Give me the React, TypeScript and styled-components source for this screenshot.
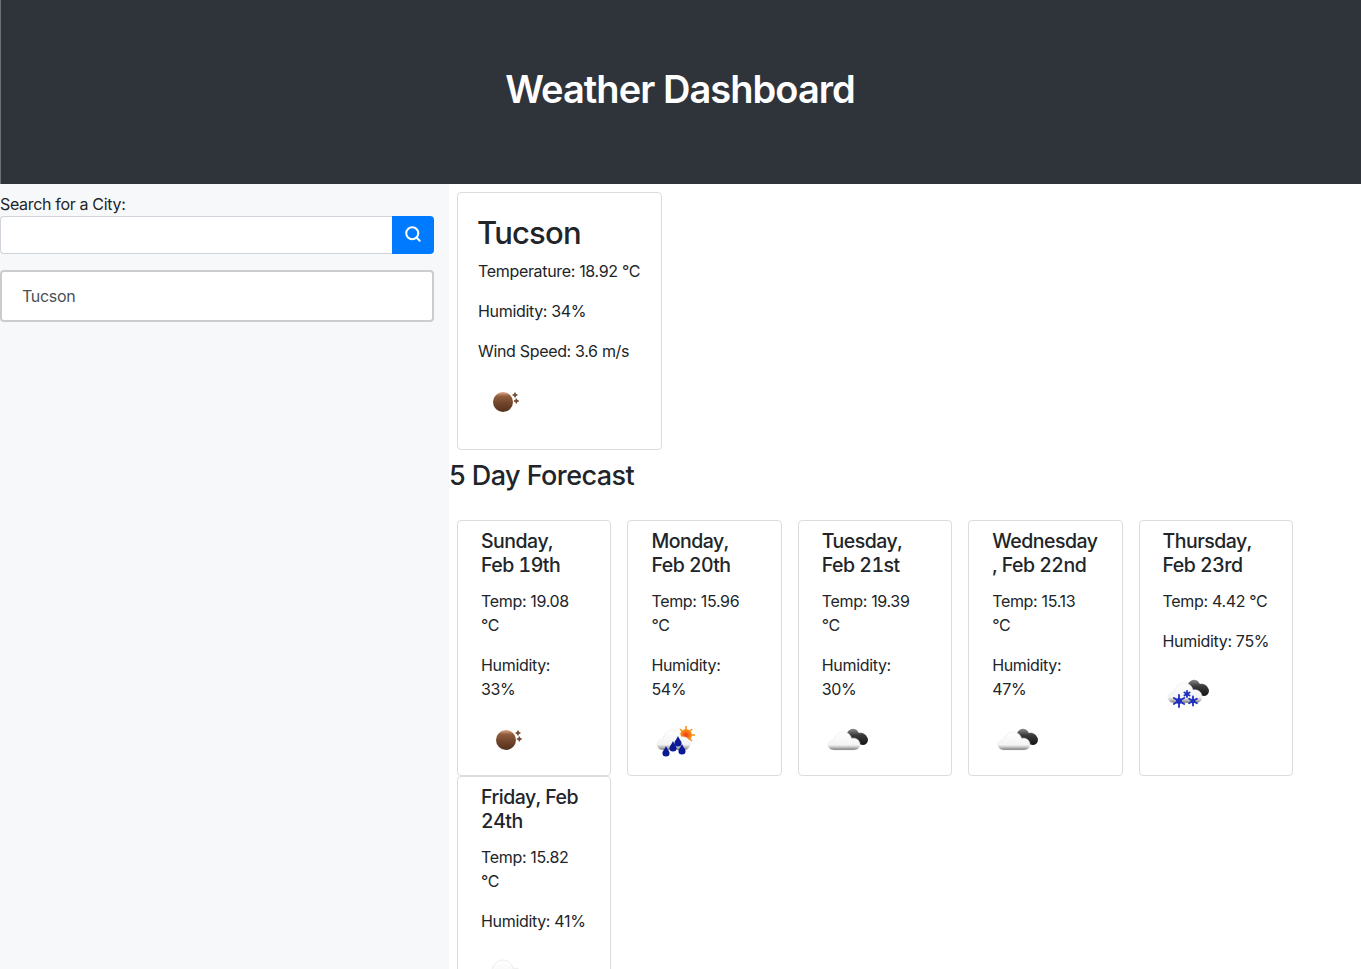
import React from "react";
import styled, { createGlobalStyle } from "styled-components";
import { Search } from "lucide-react";

const GlobalStyle = createGlobalStyle`
  html, body {
    margin: 0;
    padding: 0;
    height: 100%;
    overflow: hidden;
  }
  body {
    font-family: Inter, "Liberation Sans", sans-serif;
    font-size: 16px;
    line-height: 24px;
    letter-spacing: -0.33px;
    color: #212529;
    background: #fff;
  }
  * {
    box-sizing: border-box;
  }
`;

const Page = styled.div`
  display: flex;
  flex-direction: column;
  height: 969px;
  overflow: hidden;
`;

const Header = styled.header`
  flex: 0 0 184px;
  display: flex;
  align-items: center;
  justify-content: center;
  padding: 0 2px 6px 0;
  background: #2f343b;
  border-left: 1px solid #6b7076;
`;

const Title = styled.h1`
  margin: 0;
  font-size: 38px;
  line-height: 46px;
  font-weight: 600;
  letter-spacing: -0.95px;
  color: #fff;
`;

const Body = styled.div`
  flex: 1;
  display: flex;
  min-height: 0;
`;

const Sidebar = styled.aside`
  flex: 0 0 449px;
  padding: 8px 15px 0 0;
  background: #f7f8fa;
`;

const Label = styled.label`
  display: block;
`;

const SearchGroup = styled.div`
  display: flex;
  height: 38px;
  margin-bottom: 16px;
`;

const SearchInput = styled.input`
  flex: 1;
  min-width: 0;
  background: #fff;
  border: 1px solid #ced4da;
  border-right: 0;
  border-radius: 4px 0 0 4px;
`;

const SearchButton = styled.button`
  flex: 0 0 42px;
  display: flex;
  align-items: center;
  justify-content: center;
  padding: 0 1px 2px 0;
  border: 0;
  border-radius: 0 4px 4px 0;
  background: #007bff;
  color: #fff;
`;

const HistoryItem = styled.button`
  display: block;
  width: 100%;
  height: 52px;
  padding: 0 20px;
  background: #fff;
  border: 2px solid #ccc;
  border-radius: 4px;
  font: inherit;
  letter-spacing: inherit;
  color: #495057;
  text-align: left;
`;

const Main = styled.main`
  flex: 1;
  min-width: 0;
`;

const Card = styled.div`
  background: #fff;
  border: 1px solid #dcdcdc;
  border-radius: 4px;
`;

const CurrentCard = styled(Card)`
  width: 205px;
  margin: 8px 0 0 8px;
  padding: 20px;
`;

const CityName = styled.h2`
  margin: 0 0 6px -1px;
  font-size: 31px;
  line-height: 40px;
  font-weight: 500;
  letter-spacing: -0.8px;
`;

const Stat = styled.p`
  margin: 0 0 16px;
  white-space: nowrap;
`;

const ForecastStat = styled(Stat)<{ $oneLine?: boolean }>`
  max-width: 100px;
  white-space: ${(props) => (props.$oneLine ? "nowrap" : "normal")};
`;

const ForecastHeading = styled.h2`
  margin: 9px 0 27px;
  font-size: 27px;
  line-height: 34px;
  font-weight: 500;
  letter-spacing: -0.55px;
`;

const ForecastRow = styled.div`
  display: flex;
  flex-wrap: wrap;
  width: 853px;
`;

const ForecastCard = styled(Card)`
  flex: 0 0 154.4px;
  min-width: 0;
  height: 256px;
  margin: 0 8px;
  padding: 8px 23px;
`;

const DayName = styled.h5`
  margin: 0 0 12px;
  font-size: 19.5px;
  line-height: 24px;
  font-weight: 500;
  letter-spacing: -0.5px;
  font-variant-numeric: tabular-nums;
  overflow-wrap: anywhere;
`;

const IconBox = styled.svg`
  display: block;
  width: 50px;
  height: 50px;
`;

type IconKind = "haze" | "rain" | "cloud" | "snow" | "pale";

const cloudPath =
  "M6 20C2 20 0 17 0 14.5C0 11 3 9 6 9C7 4 11 0 16 0C21 0 24 3 25 7C30 6 34 9 34 14C34 18 31 20 28 20Z";

const darkCloudPath =
  "M0 8C1 3 5 0 8 1C11 1 12 4 13 5C17 4 20 7 21 9C23 11 22 17 17 17L6 15Z";

const Defs = () => (
  <defs>
    <linearGradient id="ball" x1="0" y1="0" x2="0" y2="1">
      <stop offset="0%" stopColor="#dca987" />
      <stop offset="22%" stopColor="#8f5d3d" />
      <stop offset="60%" stopColor="#6f432a" />
      <stop offset="100%" stopColor="#54301c" />
    </linearGradient>
    <linearGradient id="white" x1="0" y1="0" x2="0" y2="1">
      <stop offset="0%" stopColor="#ffffff" />
      <stop offset="72%" stopColor="#f4f4f4" />
      <stop offset="88%" stopColor="#b5b5b5" />
      <stop offset="100%" stopColor="#6e6e6e" />
    </linearGradient>
    <linearGradient id="dark" x1="0" y1="0" x2="0" y2="1">
      <stop offset="0%" stopColor="#8a8a8a" />
      <stop offset="40%" stopColor="#3a3a3a" />
      <stop offset="100%" stopColor="#151515" />
    </linearGradient>
    <radialGradient id="sun" cx="50%" cy="50%" r="50%">
      <stop offset="0%" stopColor="#f03a10" />
      <stop offset="100%" stopColor="#fb9a1a" />
    </radialGradient>
  </defs>
);

const DarkCloud = ({ x, y }: { x: number; y: number }) => (
  <path d={darkCloudPath} transform={`translate(${x} ${y})`} fill="url(#dark)" />
);

const WhiteCloud = ({ x, y, w, h }: { x: number; y: number; w: number; h: number }) => (
  <path
    d={cloudPath}
    transform={`translate(${x} ${y}) scale(${w / 34} ${h / 20})`}
    fill="url(#white)"
    stroke="#e2e2e2"
    strokeWidth="0.5"
  />
);

const Drop = ({ x, y }: { x: number; y: number }) => (
  <path
    d={`M${x} ${y - 6}C${x + 1} ${y - 3} ${x + 3.6} ${y - 1} ${x + 3.6} ${y + 1}A3.6 3.6 0 0 1 ${x - 3.6} ${y + 1}C${x - 3.6} ${y - 1} ${x - 1} ${y - 3} ${x} ${y - 6}Z`}
    fill="#0a1a96"
  />
);

const Star = ({ x, y }: { x: number; y: number }) => (
  <path
    d={`M${x} ${y - 2.4}L${x + 0.7} ${y - 0.7}L${x + 2.4} ${y}L${x + 0.7} ${y + 0.7}L${x} ${y + 2.4}L${x - 0.7} ${y + 0.7}L${x - 2.4} ${y}L${x - 0.7} ${y - 0.7}Z`}
    fill="#6f432a"
    stroke="#6f432a"
    strokeWidth="0.8"
  />
);

const Flake = ({ x, y, r }: { x: number; y: number; r: number }) => (
  <g stroke="#1f30c0" strokeWidth="1.8" strokeLinecap="round">
    {[0, 60, 120].map((angle) => (
      <line
        key={angle}
        x1={x - r}
        y1={y}
        x2={x + r}
        y2={y}
        transform={`rotate(${angle + 30} ${x} ${y})`}
      />
    ))}
    <circle cx={x} cy={y} r={r * 0.5} fill="#1f30c0" stroke="none" />
  </g>
);

const WeatherIcon = ({ kind }: { kind: IconKind }) => (
  <IconBox viewBox="0 0 50 50">
    <Defs />
    {kind === "haze" && (
      <g>
        <circle cx="25" cy="23" r="10" fill="url(#ball)" />
        <Star x={37} y={16} />
        <Star x={38.3} y={22} />
      </g>
    )}
    {kind === "rain" && (
      <g>
        <g stroke="#f7941d" strokeWidth="1.6">
          <line x1="35" y1="9" x2="35" y2="27" />
          <line x1="26" y1="18" x2="44" y2="18" />
          <line x1="29" y1="12" x2="41" y2="24" />
          <line x1="41" y1="12" x2="29" y2="24" />
        </g>
        <circle cx="35" cy="18" r="6" fill="url(#sun)" />
        <WhiteCloud x={6} y={13} w={33} h={20} />
        <Drop x={27} y={25} />
        <Drop x={22} y={30} />
        <Drop x={31} y={33} />
        <Drop x={15} y={35} />
      </g>
    )}
    {kind === "cloud" && (
      <g>
        <DarkCloud x={24} y={11} />
        <WhiteCloud x={6} y={15} w={32} h={18} />
      </g>
    )}
    {kind === "snow" && (
      <g>
        <DarkCloud x={24} y={10} />
        <WhiteCloud x={5} y={14} w={34} h={20} />
        <Flake x={24} y={25} r={3} />
        <Flake x={30} y={32} r={4.5} />
        <Flake x={16} y={32} r={6} />
      </g>
    )}
    {kind === "pale" && <WhiteCloud x={4} y={11} w={38} h={24} />}
  </IconBox>
);

const forecast: {
  day: string;
  temp: string;
  humidity: string;
  icon: IconKind;
  tempOneLine?: boolean;
  humidityOneLine?: boolean;
}[] = [
  { day: "Sunday, Feb 19th", temp: "19.08", humidity: "33%", icon: "haze" },
  { day: "Monday, Feb 20th", temp: "15.96", humidity: "54%", icon: "rain" },
  { day: "Tuesday, Feb 21st", temp: "19.39", humidity: "30%", icon: "cloud" },
  { day: "Wednesday, Feb 22nd", temp: "15.13", humidity: "47%", icon: "cloud" },
  { day: "Thursday, Feb 23rd", temp: "4.42", humidity: "75%", icon: "snow", tempOneLine: true, humidityOneLine: true },
  { day: "Friday, Feb 24th", temp: "15.82", humidity: "41%", icon: "pale", humidityOneLine: true },
];

export default function App() {
  return (
    <Page>
      <GlobalStyle />
      <Header>
        <Title>Weather Dashboard</Title>
      </Header>
      <Body>
        <Sidebar>
          <Label htmlFor="city">Search for a City:</Label>
          <SearchGroup>
            <SearchInput id="city" type="text" />
            <SearchButton type="button" aria-label="Search">
              <Search size={18} strokeWidth={2.7} />
            </SearchButton>
          </SearchGroup>
          <HistoryItem type="button">Tucson</HistoryItem>
        </Sidebar>
        <Main>
          <CurrentCard>
            <CityName>Tucson</CityName>
            <Stat>Temperature: 18.92 °C</Stat>
            <Stat>Humidity: 34%</Stat>
            <Stat>Wind Speed: 3.6 m/s</Stat>
            <WeatherIcon kind="haze" />
          </CurrentCard>
          <ForecastHeading>5 Day Forecast</ForecastHeading>
          <ForecastRow>
            {forecast.map((item) => (
              <ForecastCard key={item.day}>
                <DayName>{item.day}</DayName>
                <ForecastStat $oneLine={item.tempOneLine}>Temp: {item.temp} °C</ForecastStat>
                <ForecastStat $oneLine={item.humidityOneLine}>Humidity: {item.humidity}</ForecastStat>
                <WeatherIcon kind={item.icon} />
              </ForecastCard>
            ))}
          </ForecastRow>
        </Main>
      </Body>
    </Page>
  );
}
